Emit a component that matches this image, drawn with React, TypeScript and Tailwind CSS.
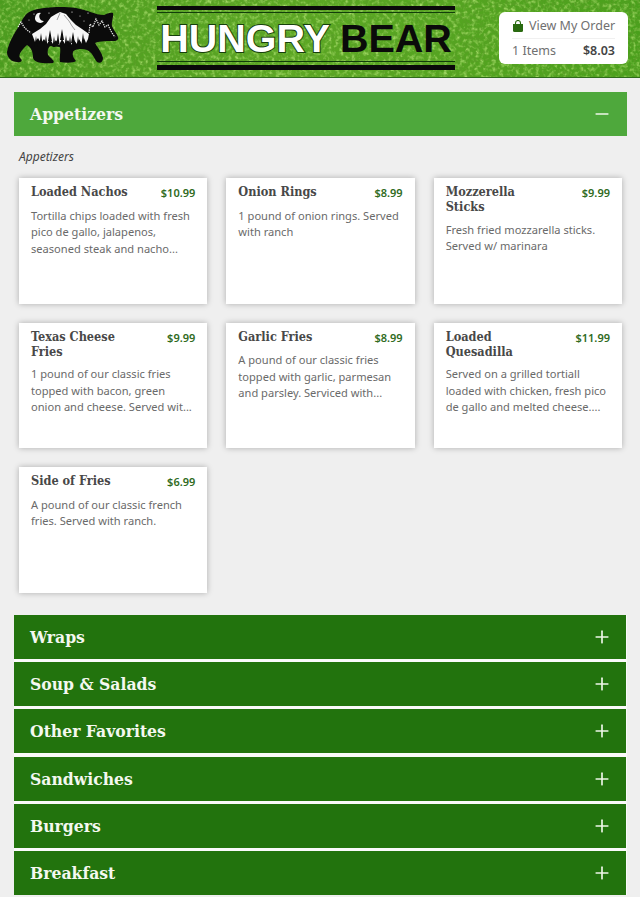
import { Minus, Plus } from "lucide-react";

const slab = "font-['DejaVu_Serif_Condensed','DejaVu_Serif',serif]";

const items = [
  { name: "Loaded Nachos", price: "$10.99", text: "Tortilla chips loaded with fresh pico de gallo, jalapenos, seasoned steak and nacho..." },
  { name: "Onion Rings", price: "$8.99", text: "1 pound of onion rings. Served with ranch" },
  { name: "Mozzerella Sticks", price: "$9.99", text: "Fresh fried mozzarella sticks. Served w/ marinara" },
  { name: "Texas Cheese Fries", price: "$9.99", text: "1 pound of our classic fries topped with bacon, green onion and cheese. Served wit..." },
  { name: "Garlic Fries", price: "$8.99", text: "A pound of our classic fries topped with garlic, parmesan and parsley. Serviced with..." },
  { name: "Loaded Quesadilla", price: "$11.99", text: "Served on a grilled tortiall loaded with chicken, fresh pico de gallo and melted cheese...." },
  { name: "Side of Fries", price: "$6.99", text: "A pound of our classic french fries. Served with ranch." },
];

const categories = ["Wraps", "Soup & Salads", "Other Favorites", "Sandwiches", "Burgers", "Breakfast"];

function Grass() {
  return (
    <svg className="absolute inset-0 h-full w-full" preserveAspectRatio="none">
      <defs>
        <filter id="grain" x="0" y="0" width="100%" height="100%">
          <feTurbulence type="fractalNoise" baseFrequency="0.35" numOctaves="3" seed="7" />
          <feColorMatrix values="0 0 0 0 0.1  0 0 0 0 0.34  0 0 0 0 0.02  2.4 0 0 0 -1.05" />
        </filter>
        <filter id="light" x="0" y="0" width="100%" height="100%">
          <feTurbulence type="fractalNoise" baseFrequency="0.25" numOctaves="3" seed="21" />
          <feColorMatrix values="0 0 0 0 0.42  0 0 0 0 0.75  0 0 0 0 0.16  0 2.2 0 0 -1" />
        </filter>
        <linearGradient id="grass" x1="0" x2="1" y1="0" y2="0">
          <stop offset="0" stopColor="#4a9c1e" />
          <stop offset="0.45" stopColor="#5da824" />
          <stop offset="1" stopColor="#4aa01c" />
        </linearGradient>
      </defs>
      <rect width="100%" height="100%" fill="url(#grass)" />
      <rect width="100%" height="100%" filter="url(#light)" />
      <rect width="100%" height="100%" filter="url(#grain)" />
    </svg>
  );
}

const pines = [
  [36, 36, 3], [41, 33, 3], [46, 35, 3], [50, 30, 4], [54, 36, 3], [58, 33, 3], [62, 29, 4], [66, 35, 3], [70, 36, 3], [73, 32, 4], [78, 36, 3], [83, 33, 3],
];

function Bear() {
  return (
    <svg viewBox="6 6 114 60" className="relative h-[60px] w-[114px] shrink-0">
      <path
        d="M118 37 C117 33 113 30 112 26 C111 22 114 16 113 13 C110 12 107 14 104 15 C95 15 88 10 76 8 C62 6 44 7 34 10 C26 12 23 18 19 26 C14 34 9 42 7 52 C7 58 12 62 17 62 C22 63 23 60 20 58 C18 54 22 50 27 45 C31 47 33 52 33 58 C34 63 46 64 53 63 C56 61 50 58 48 55 C47 51 48 48 50 46 L60 47 C61 52 59 58 60 62 C66 63 74 63 76 61 C74 58 72 56 73 52 C74 49 82 48 87 50 C92 52 94 58 97 62 C100 64 103 62 103 58 C102 53 98 48 95 43 C100 41 108 41 114 41 C117 41 119 39 118 37 Z"
        fill="#0b0b0b"
      />
      <path
        d="M32 34 L40 29 L46 24 L51 17 L56 14 L60 12 L66 14 L71 20 L76 25 L82 29 L89 34 L88 39 L86 43 L84 38 L82 44 L79 39 L77 44 L74 40 L71 45 L68 40 L65 44 L62 39 L59 45 L56 40 L53 44 L50 39 L47 44 L44 39 L41 43 L38 38 L35 42 Z"
        fill="#f7f7f7"
      />
      <g fill="#0b0b0b">
        {pines.map(([x, y, w]) => (
          <path key={x} d={`M${x} ${y} L${x + w / 2} ${y + 11} L${x - w / 2} ${y + 11} Z`} />
        ))}
      </g>
      <path d="M64 15 L69 21 L72 26 L75 30 M60 13 L57 20" stroke="#666" strokeWidth="0.6" fill="none" />
      <path
        d="M18 27 L21 22 L24 27 L27 30 L31 33 M89 33 L90 24 L93 27 L96 19 L99 25 L102 21 L105 27 L108 25 L112 33 L115 37"
        stroke="#e8e8e8"
        strokeWidth="1.2"
        strokeDasharray="1.4 0.9"
        fill="none"
      />
      <path d="M41 13 A5 5 0 1 0 44 21 A4.5 4.5 0 0 1 41 13 Z" fill="#f5f5f5" />
      <g fill="#fff">
        <circle cx="34" cy="14" r="0.6" />
        <circle cx="49" cy="13" r="0.6" />
        <circle cx="29" cy="20" r="0.5" />
        <circle cx="72" cy="12" r="0.6" />
        <circle cx="88" cy="13" r="0.6" />
        <circle cx="80" cy="16" r="0.5" />
        <circle cx="84" cy="21" r="0.5" />
      </g>
    </svg>
  );
}

function Logo() {
  return (
    <div className="relative ml-[37px] flex w-[298px] shrink-0 flex-col">
      <div className="mt-[6px] h-[4px] bg-[#0a0a0a]" />
      <div className="mt-[2px] h-[1px] bg-[#123d0a]" />
      <div className="mt-[6px] flex h-[39px] items-center justify-center gap-[10px] font-['Liberation_Sans',sans-serif] text-[39.5px] leading-none font-bold">
        <span className="text-white [-webkit-text-stroke:2px_#17400c] [paint-order:stroke_fill]">HUNGRY</span>
        <span className="text-[#0a0a0a]">BEAR</span>
      </div>
      <div className="mt-[3px] h-[1px] bg-[#123d0a]" />
      <div className="mt-[3px] h-[5px] bg-[#0a0a0a]" />
    </div>
  );
}

function OrderBox() {
  return (
    <div className="relative mt-[12px] mr-[12px] ml-auto flex h-[52px] w-[129px] flex-col self-start rounded-[6px] bg-white px-[13px] font-['Noto_Sans',sans-serif] text-[12.5px] leading-none text-[#707070]">
      <div className="flex h-[27px] items-center gap-[5px] border-b border-[#f0f0f0] pt-[2px]">
        <svg viewBox="0 0 12 12" className="h-[12px] w-[12px] shrink-0">
          <path d="M3.5 4 V3 A2.5 2.5 0 0 1 8.5 3 V4" fill="none" stroke="#2a6a10" strokeWidth="1.1" />
          <path d="M1 4 H11 V10.5 A1.5 1.5 0 0 1 9.5 12 H2.5 A1.5 1.5 0 0 1 1 10.5 Z" fill="#2a6a10" />
        </svg>
        <span className="whitespace-nowrap">View My Order</span>
      </div>
      <div className="flex flex-1 items-center justify-between">
        <span>1 Items</span>
        <span className="font-semibold text-[#444]">$8.03</span>
      </div>
    </div>
  );
}

function ItemCard({ name, price, text }: { name: string; price: string; text: string }) {
  return (
    <div className="h-[125.5px] bg-white px-[12px] pt-[6px] shadow-[0_0_6px_rgba(0,0,0,0.28)]">
      <div className="flex items-start justify-between">
        <h3 className={`${slab} w-[100px] text-[12.6px] leading-[15px] font-bold text-[#484848]`}>{name}</h3>
        <span className="pt-[1px] font-['Noto_Sans',sans-serif] text-[11px] leading-[15px] font-semibold text-[#2f6b22]">
          {price}
        </span>
      </div>
      <p className="mt-[7.5px] font-['Noto_Sans',sans-serif] text-[11.1px] leading-[16.5px] text-[#6a6a6a]">{text}</p>
    </div>
  );
}

function CategoryBar({ title }: { title: string }) {
  return (
    <div className="flex h-[44px] items-center justify-between bg-[#22730d] pr-[14px] pl-[16px]">
      <span className={`${slab} text-[17.4px] font-bold text-[#f4f8f0]`}>{title}</span>
      <Plus size={20} strokeWidth={2} className="text-[#eef6e8]" />
    </div>
  );
}

export default function App() {
  return (
    <div className="h-[897px] overflow-hidden bg-[#efefef]">
      <header className="relative flex h-[78px] items-start border-b border-[#2f6b1c] pl-[6px]">
        <Grass />
        <div className="relative mt-[6px]">
          <Bear />
        </div>
        <Logo />
        <OrderBox />
      </header>

      <main className="mt-[14px] mr-[13px] ml-[14px]">
        <div className="flex h-[44px] items-center justify-between bg-[#4ea83c] pr-[15px] pl-[16px]">
          <span className={`${slab} text-[17.4px] font-bold text-[#f4f8f0]`}>Appetizers</span>
          <Minus size={20} strokeWidth={2} className="text-[#eef6e8]" />
        </div>
        <div className="px-[5px]">
          <p className="mt-[13px] font-['Noto_Sans',sans-serif] text-[12px] leading-[16px] text-[#444] italic">
            Appetizers
          </p>
          <div className="mt-[13px] grid grid-cols-3 gap-x-[19px] gap-y-[19px]">
            {items.map((item) => (
              <ItemCard key={item.name} {...item} />
            ))}
          </div>
        </div>
        <div className="mt-[22.5px] flex flex-col gap-[3.2px] bg-[#fafafa] pr-[1px]">
          {categories.map((c) => (
            <CategoryBar key={c} title={c} />
          ))}
        </div>
      </main>
    </div>
  );
}
